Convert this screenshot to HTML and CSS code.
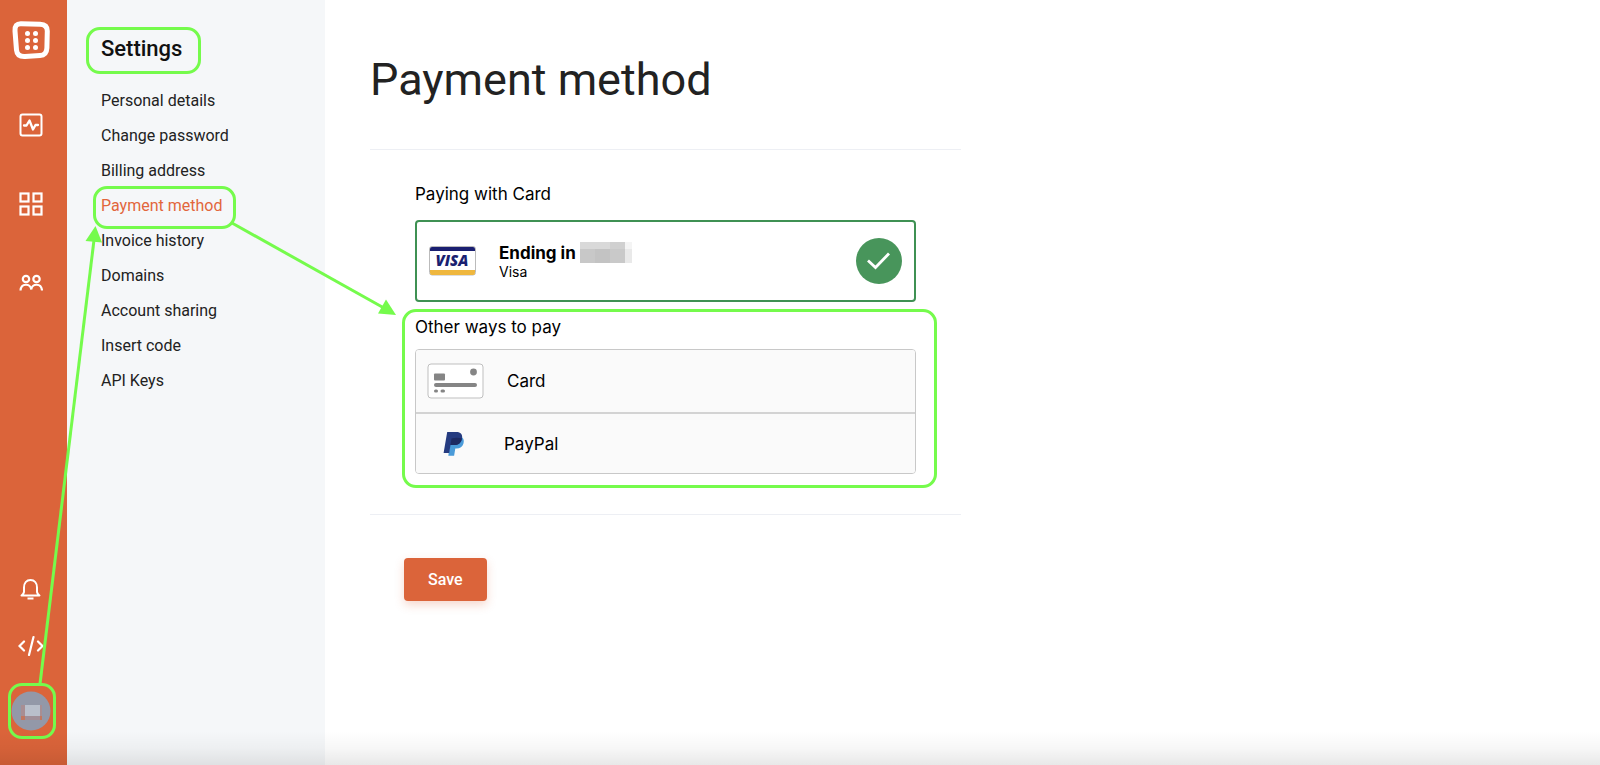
FILE: index.html
```html
<!DOCTYPE html>
<html lang="en">
<head>
  <meta charset="UTF-8">
  <meta name="viewport" content="width=device-width, initial-scale=1">
  <title>Payment method</title>
  <link rel="stylesheet" href="styles.css">
</head>
<body>

  <nav class="rail" aria-label="Main">
    <a class="logo" href="#" aria-label="Home">
      <svg width="40" height="40" viewBox="0 0 40 40">
        <path d="M10 3.700L29 4.200Q36.400 4.600 36.300 11L35.900 28Q35.600 35.200 29 35.600L14 36.600Q6.200 37 5.500 30L4 11Q3.500 3.500 10 3.700Z" fill="none" stroke="#fff" stroke-width="5"/>
        <g fill="#fff">
          <circle cx="16.500" cy="13.500" r="2.500"/><circle cx="24.500" cy="13.500" r="2.500"/>
          <circle cx="16.500" cy="20.500" r="2.500"/><circle cx="24.500" cy="20.500" r="2.500"/>
          <circle cx="16.500" cy="27.500" r="2.500"/><circle cx="24.500" cy="27.500" r="2.500"/>
        </g>
      </svg>
    </a>
    <a href="#" aria-label="Activity">
      <svg width="24" height="24" viewBox="0 0 24 24" fill="none" stroke="#fff" stroke-width="2" stroke-linejoin="round" stroke-linecap="round">
        <rect x="1.500" y="1.500" width="21" height="21" rx="2"/>
        <path d="M5 12.500h2.500l3-5 3.500 9 2.500-4.500h2.500" stroke-width="2.300"/>
      </svg>
    </a>
    <a href="#" aria-label="Apps">
      <svg width="24" height="24" viewBox="0 0 24 24" fill="none" stroke="#fff" stroke-width="2.200">
        <rect x="1.500" y="1.500" width="8" height="8"/><rect x="14.500" y="1.500" width="8" height="8"/>
        <rect x="1.500" y="14.500" width="8" height="8"/><rect x="14.500" y="14.500" width="8" height="8"/>
      </svg>
    </a>
    <a href="#" aria-label="Team">
      <svg width="24" height="24" viewBox="0 0 24 24" fill="none" stroke="#fff" stroke-width="2.200">
        <circle cx="7" cy="8" r="3.200"/><circle cx="17.500" cy="8" r="3.200"/>
        <path d="M1.500 19.500C2 12 11.500 12 12.300 18.500C13 12 22.500 12 23 19.500"/>
      </svg>
    </a>
    <div class="rail-bottom">
      <a href="#" aria-label="Notifications">
        <svg width="24" height="24" viewBox="0 0 24 24" fill="none" stroke="#fff" stroke-width="2" stroke-linejoin="round">
          <path d="M5 10.500C5 6 7.500 3 11.500 3S18 6 18 10.500V15q.3 2 2.500 3.500h-18Q4.700 17 5 15z"/>
          <path d="M8.500 21.500h6"/>
        </svg>
      </a>
      <a href="#" aria-label="Code">
        <svg width="26" height="24" viewBox="0 0 26 24" fill="none" stroke="#fff" stroke-width="2.200" stroke-linecap="round">
          <path d="M6 7.500L1.500 12 6 16.500M15.500 3l-4.500 18M20 7.500l4.500 4.500-4.500 4.500"/>
        </svg>
      </a>
      <a class="avatar marked" href="#" aria-label="Account">
        <svg width="40" height="40" viewBox="0 0 40 40">
          <circle cx="20" cy="20" r="19.500" fill="#9398a8"/>
          <path d="M10 14h4v11h-4zM29 14h2v11h-2z" fill="#a88e93"/>
          <path d="M10 25h4v4h-4zM29 25h2v4h-2z" fill="#c2775f"/>
          <path d="M14 25h15v4H14z" fill="#a08f98"/>
          <path d="M14 14h15v11H14z" fill="#b9bfcb"/>
        </svg>
      </a>
    </div>
  </nav>

  <aside class="sidebar">
    <h2 class="sidebar-title marked">Settings</h2>
    <ul class="menu">
      <li><a href="#">Personal details</a></li>
      <li><a href="#">Change password</a></li>
      <li><a href="#">Billing address</a></li>
      <li><a class="active marked" href="#" aria-current="page">Payment method</a></li>
      <li><a href="#">Invoice history</a></li>
      <li><a href="#">Domains</a></li>
      <li><a href="#">Account sharing</a></li>
      <li><a href="#">Insert code</a></li>
      <li><a href="#">API Keys</a></li>
    </ul>
  </aside>

  <main class="content">
    <h1>Payment method</h1>

    <form id="paymentForm">
      <div class="methods">
        <h3>Paying with Card</h3>
        <div class="current-card">
          <svg class="visa" width="48" height="30" viewBox="0 0 48 30" role="img" aria-label="Visa">
            <rect x="0.500" y="0.500" width="46" height="28.500" rx="2.500" fill="#fff" stroke="#bbb"/>
            <path d="M1 5V3q0-2 2-2h41q2 0 2 2v2z" fill="#1a1f71"/>
            <path d="M1 24h45v3q0 2-2 2H3q-2 0-2-2z" fill="#efb73e"/>
            <text class="visa-text" x="23" y="20" text-anchor="middle">VISA</text>
          </svg>
          <div class="card-info">
            <div class="card-number">
              <strong>Ending in</strong>
              <svg width="52" height="21" viewBox="0 0 52 21" aria-hidden="true">
                <path d="M0 0h30v7H0z" fill="#d9d9d9"/><path d="M30 0h15v7H30z" fill="#d0d0d0"/>
                <path d="M45 0h7v7h-7z" fill="#f4f4f4"/><path d="M0 7h15v14H0z" fill="#c8c8c8"/>
                <path d="M15 7h15v14H15z" fill="#c3c3c3"/><path d="M30 7h15v14H30z" fill="#c9c9c9"/>
                <path d="M45 7h7v14h-7z" fill="#e9e9e9"/>
              </svg>
            </div>
            <div class="card-brand">Visa</div>
          </div>
          <svg class="check" width="46" height="46" viewBox="0 0 46 46" fill="none">
            <circle cx="23" cy="23" r="23" fill="#48955b"/>
            <path d="M12 22.500l7.500 7L33 15.500" stroke="#fff" stroke-width="2.800"/>
          </svg>
        </div>

        <div class="other marked">
          <h3>Other ways to pay</h3>
          <div class="options">
            <button type="button" class="option">
              <svg width="58" height="36" viewBox="0 0 58 36">
                <rect x="1" y="1" width="55" height="34" rx="3" fill="#fff" stroke="#bfbfbf"/>
                <g fill="#858585">
                  <rect x="7" y="10.500" width="11" height="7" rx="1"/>
                  <circle cx="46.500" cy="9" r="3.400"/>
                  <rect x="7" y="20" width="43" height="4" rx="2"/>
                  <rect x="7" y="26.500" width="4" height="3" rx="1.500"/><rect x="13.500" y="26.500" width="4.500" height="3" rx="1.500"/>
                </g>
              </svg>
              <span>Card</span>
            </button>
            <button type="button" class="option paypal">
              <svg width="22" height="26" viewBox="0 0 22 26">
                <path d="M18.500 6C21 7.500 21.200 10 20.400 12.800 19.500 16 17 17.500 13.500 17.500h-1.200l-1.200 7.200H5.300L7.500 10z" fill="#4a9bd9"/>
                <path d="M4.200 1h9.300C17.500 1 20 3.400 19 7.800 18.200 12 15.300 14 11.500 14H7.500L6.200 22H.6z" fill="#253b80"/>
                <path d="M8.500 7.500q5-1.200 10.400-.1C18.200 12 15.300 14 11.500 14H7.500z" fill="#1d2a62"/>
              </svg>
              <span>PayPal</span>
            </button>
          </div>
        </div>
      </div>

      <button type="submit" class="save">Save</button>
    </form>
  </main>

  <!-- arrows between the highlighted steps -->
  <svg class="arrows" width="420" height="765" viewBox="0 0 420 765" aria-hidden="true">
    <g fill="none" stroke="#75fb4c" stroke-width="3">
      <path d="M40 684L94 240"/>
      <path d="M232 223L384 308"/>
    </g>
    <path d="M95.500 226L102 242.500 85.500 241z" fill="#75fb4c"/>
    <path d="M396 315L378 313.500 386 299.500z" fill="#75fb4c"/>
  </svg>

</body>
</html>
```

FILE: styles.css
```css
* {
  box-sizing: border-box;
}
body {
  margin: 0;
  min-height: 100vh;
  display: flex;
  position: relative;
  font-family: Roboto, sans-serif;
  font-size: 16px;
  color: #222;
  background: #fff;
}
body::after {
  content: "";
  position: absolute;
  left: 0;
  right: 0;
  bottom: 0;
  height: 34px;
  background: linear-gradient(rgba(0,0,0,0), rgba(0,0,0,0.03) 50%, rgba(0,0,0,0.09));
  pointer-events: none;
}
a {
  color: inherit;
  text-decoration: none;
}
svg {
  display: block;
  flex-shrink: 0;
}
h1, h2, h3, ul {
  margin: 0;
  padding: 0;
  font-weight: 400;
}

/* green highlight around a step */
.marked {
  position: relative;
}
.marked::before {
  content: "";
  position: absolute;
  border: 3px solid #75fb4c;
  border-radius: 14px;
  pointer-events: none;
}

/* left rail */
.rail {
  width: 67px;
  flex-shrink: 0;
  padding: 20px 6px 34px 0;
  background: #db643a;
  display: flex;
  flex-direction: column;
  align-items: center;
  gap: 55px;
}
.rail .logo {
  margin-bottom: -2px;
}
.rail-bottom {
  margin-top: auto;
  display: flex;
  flex-direction: column;
  align-items: center;
  gap: 33px;
}
.rail .avatar::before {
  inset: -8px -5px -8px -3px;
}

/* settings menu */
.sidebar {
  width: 258px;
  flex-shrink: 0;
  padding: 34px;
  background: #f5f7f9;
}
.sidebar-title {
  width: fit-content;
  font-size: 22px;
  line-height: 30px;
  font-weight: 500;
  color: #111;
}
.sidebar-title::before {
  inset: -7px -19px -10px -15px;
}
.menu {
  margin-top: 19px;
  list-style: none;
}
.menu li {
  height: 35px;
  line-height: 35px;
}
.menu a {
  display: inline-block;
}
.menu .active {
  color: #e2663c;
}
.menu .active::before {
  inset: -2px -14px -6px -8px;
}

/* page */
.content {
  flex: 1;
  max-width: 681px;
  padding: 52px 45px;
}
h1 {
  font-size: 45px;
  line-height: 56px;
}
.methods {
  margin-top: 41px;
  padding: 31px 45px 40px;
  border: solid #edeff4;
  border-width: 1px 0;
  font-family: Inter, sans-serif;
  color: #000;
}
.methods h3 {
  font-size: 17px;
  line-height: 26px;
}
.current-card {
  height: 82px;
  margin-top: 13px;
  padding: 0 12px;
  border: 2px solid #3f9153;
  border-radius: 4px;
  display: flex;
  align-items: center;
}
.visa-text {
  font: italic 800 15px "Open Sans", sans-serif;
  fill: #1a1f71;
}
.card-info {
  margin-left: 22px;
}
.card-number {
  display: flex;
  align-items: center;
  gap: 4px;
  height: 21px;
  font-size: 17px;
}
.card-brand {
  font-size: 14px;
  line-height: 17px;
}
.check {
  margin-left: auto;
}
.other {
  margin-top: 12px;
}
.other::before {
  inset: -5px -21px -14px -13px;
}
.options {
  margin-top: 9px;
  border: 1px solid #c8c8c8;
  border-radius: 4px;
  overflow: hidden;
}
.option {
  display: flex;
  align-items: center;
  gap: 22px;
  width: 100%;
  height: 62px;
  padding: 0 11px;
  border: none;
  background: #fafafa;
  font: 17px Inter, sans-serif;
  color: #000;
  cursor: pointer;
}
.option + .option {
  height: 61px;
  border-top: 2px solid #d3d3d3;
}
.paypal {
  gap: 39px;
  padding: 0 27px;
}
.save {
  margin: 43px 34px;
  padding: 0 24px;
  height: 43px;
  border: none;
  border-radius: 4px;
  background: #db643a;
  box-shadow: 0 4px 10px rgba(219,100,58,0.25);
  font: 500 16px Roboto, sans-serif;
  color: #fff;
  cursor: pointer;
}

.arrows {
  position: absolute;
  left: 0;
  top: 0;
  pointer-events: none;
}
```
